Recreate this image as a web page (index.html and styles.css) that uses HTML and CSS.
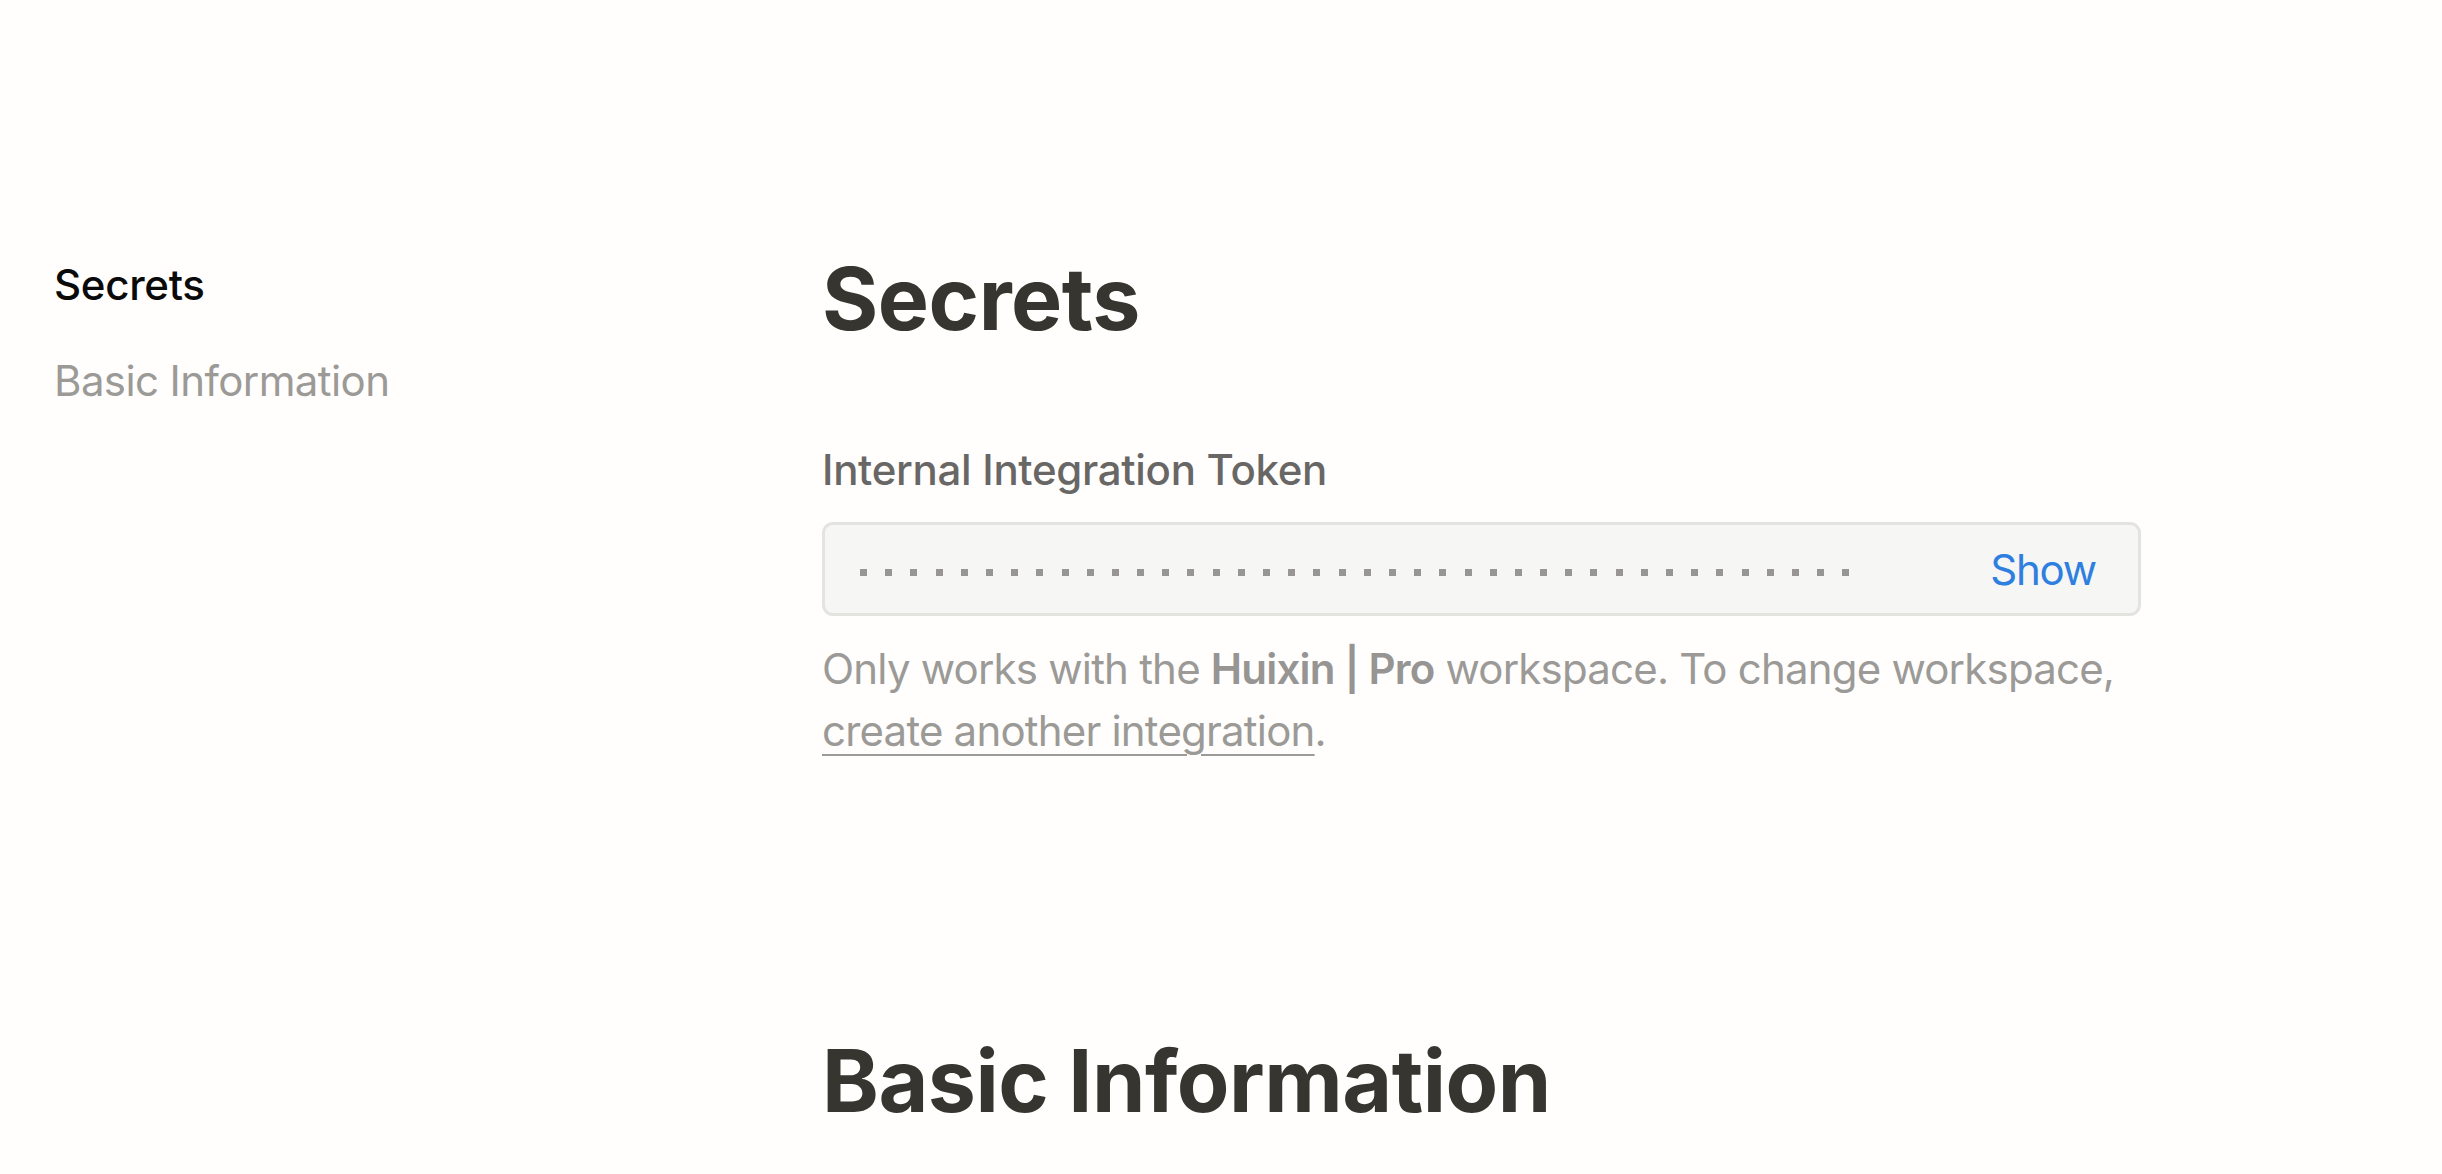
FILE: index.html
```html
<!DOCTYPE html>
<html lang="en">
<head>
<meta charset="utf-8">
<title>Integration settings</title>
<link rel="stylesheet" href="styles.css">
</head>
<body>
<div class="page">
  <nav class="sidebar">
    <a class="nav-item active" href="#secrets">Secrets</a>
    <a class="nav-item" href="#basic">Basic Information</a>
  </nav>
  <main class="content">
    <section class="section" id="secrets">
      <h1 class="section-title">Secrets</h1>
      <div class="field-label">Internal Integration Token</div>
      <div class="token-box">
        <div class="dots">
          <span class="dot"></span><span class="dot"></span><span class="dot"></span><span class="dot"></span><span class="dot"></span>
          <span class="dot"></span><span class="dot"></span><span class="dot"></span><span class="dot"></span><span class="dot"></span>
          <span class="dot"></span><span class="dot"></span><span class="dot"></span><span class="dot"></span><span class="dot"></span>
          <span class="dot"></span><span class="dot"></span><span class="dot"></span><span class="dot"></span><span class="dot"></span>
          <span class="dot"></span><span class="dot"></span><span class="dot"></span><span class="dot"></span><span class="dot"></span>
          <span class="dot"></span><span class="dot"></span><span class="dot"></span><span class="dot"></span><span class="dot"></span>
          <span class="dot"></span><span class="dot"></span><span class="dot"></span><span class="dot"></span><span class="dot"></span>
          <span class="dot"></span><span class="dot"></span><span class="dot"></span><span class="dot"></span><span class="dot"></span>
        </div>
        <button class="show-btn" type="button">Show</button>
      </div>
      <p class="help">Only works with the <strong>Huixin | Pro</strong> workspace. To change workspace, <a class="help-link" href="#">create another integration</a>.</p>
    </section>
    <section class="section section-basic" id="basic">
      <h1 class="section-title">Basic Information</h1>
    </section>
  </main>
</div>
</body>
</html>
```
FILE: styles.css
```css
html, body {
  margin: 0;
  padding: 0;
  background: #fffefd;
}

body {
  font-family: Inter, "Noto Sans", "Liberation Sans", sans-serif;
  color: #37352f;
}

.page {
  display: flex;
  align-items: flex-start;
}

.sidebar {
  box-sizing: border-box;
  width: 822px;
  flex-shrink: 0;
  padding: 253px 0 0 54px;
  display: flex;
  flex-direction: column;
  gap: 33px;
}

.nav-item {
  font-size: 42px;
  line-height: 63px;
  color: #9b9a97;
  text-decoration: none;
  letter-spacing: -0.6px;
}

.nav-item.active {
  color: #0a0a0a;
  font-weight: 500;
  letter-spacing: -0.3px;
}

.content {
  width: 1320px;
  padding-top: 248px;
}

.section-title {
  margin: 0;
  font-size: 86px;
  line-height: 103px;
  font-weight: 700;
  color: #37352f;
  letter-spacing: -0.5px;
}

.field-label {
  margin-top: 87px;
  font-size: 42px;
  line-height: 63px;
  font-weight: 500;
  color: #686765;
  letter-spacing: -0.3px;
}

.token-box {
  box-sizing: border-box;
  margin-top: 21px;
  height: 94px;
  width: 1319px;
  border: 3px solid #e3e3e0;
  border-radius: 11px;
  background: #f6f6f4;
  display: flex;
  align-items: center;
  justify-content: space-between;
  padding: 0 42px 0 35px;
}

.dots {
  display: flex;
  gap: 18.2px;
  margin-top: 6px;
}

.dot {
  width: 7px;
  height: 7px;
  background: #979694;
}

.show-btn {
  border: 0;
  background: transparent;
  padding: 0;
  font-family: inherit;
  font-size: 42px;
  line-height: 63px;
  color: #2f7fe0;
  cursor: pointer;
  letter-spacing: -1.2px;
}

.help {
  margin: 22px 0 0;
  font-size: 42px;
  line-height: 62px;
  color: #9b9a97;
  letter-spacing: -0.8px;
}

.help strong {
  font-weight: 600;
  color: #969593;
}

.help-link {
  color: #9b9a97;
  text-decoration: underline;
  text-decoration-thickness: 2px;
  text-underline-offset: 8px;
}

.section-basic {
  margin-top: 268px;
}
```
